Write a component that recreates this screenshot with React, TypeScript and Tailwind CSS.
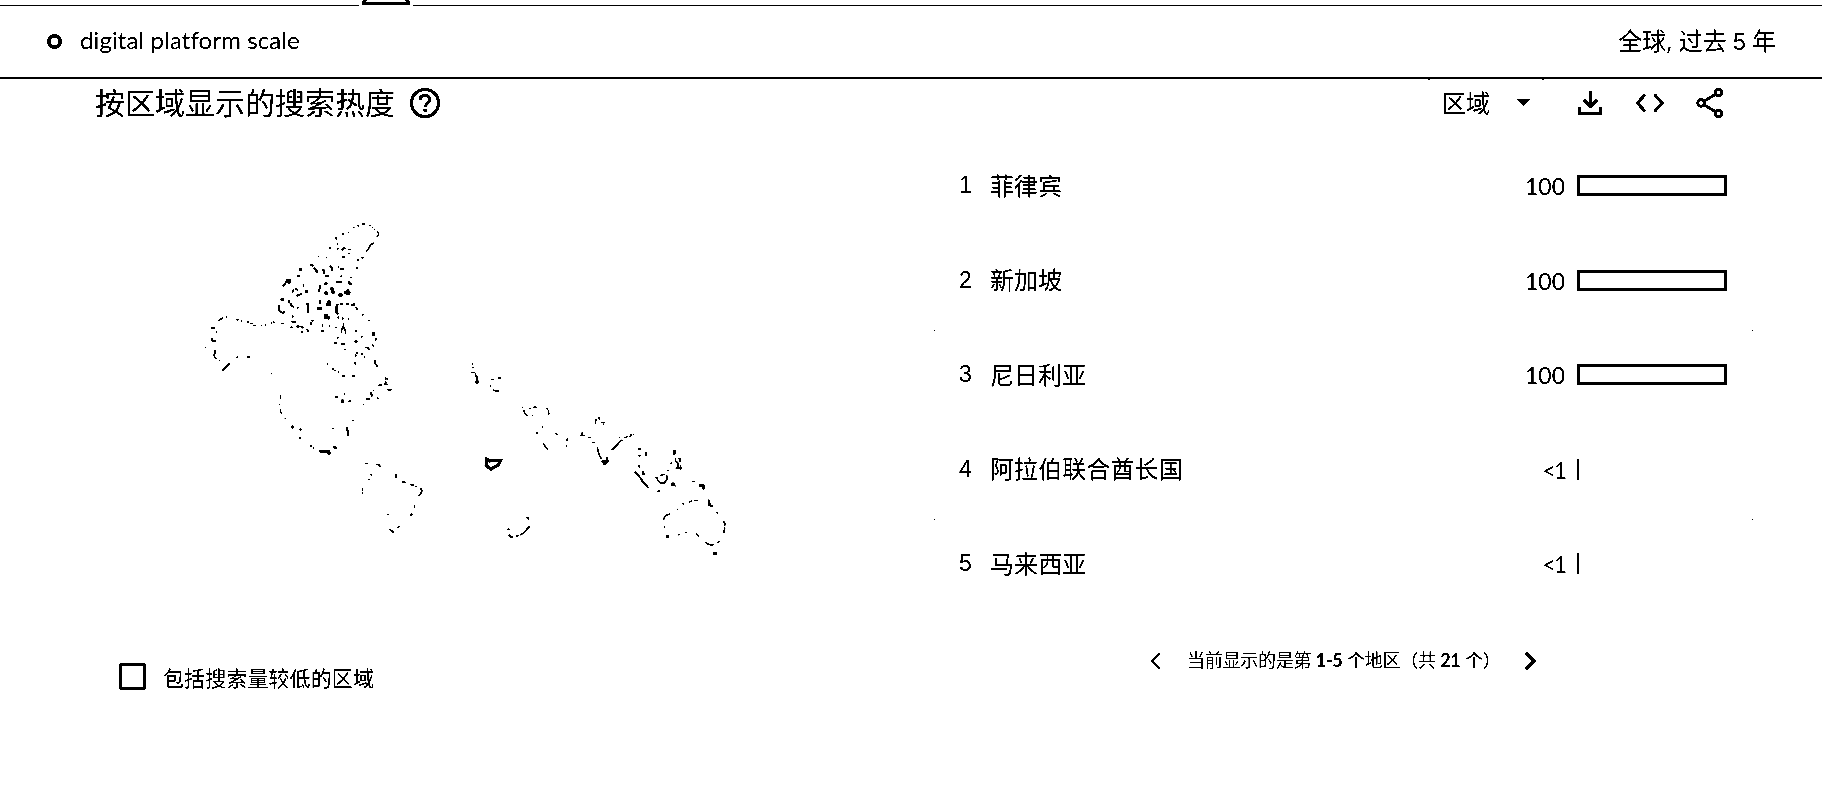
import React from 'react';

type Region = { rank: number; name: string; value: string; share: number };

const regions: Region[] = [
  { rank: 1, name: '菲律宾', value: '100', share: 100 },
  { rank: 2, name: '新加坡', value: '100', share: 100 },
  { rank: 3, name: '尼日利亚', value: '100', share: 100 },
  { rank: 4, name: '阿拉伯联合酋长国', value: '<1', share: 0 },
  { rank: 5, name: '马来西亚', value: '<1', share: 0 },
];

function HelpIcon() {
  return (
    <svg width="32" height="32" viewBox="0 0 32 32" fill="none" stroke="#000">
      <circle cx="16" cy="16" r="13.6" strokeWidth="3" />
      <path d="M11 13.3C11 10 13.2 8.3 16 8.3S21 10.200 21 12.700C21 16 16.400 16 16.400 19.700" strokeWidth="3" />
      <path d="M14.500 23.200h3.500" strokeWidth="3.200" />
    </svg>
  );
}

function DownloadIcon() {
  return (
    <svg width="26" height="26" viewBox="0 0 26 26" fill="none" stroke="#000" strokeWidth="3">
      <path d="M13.500 1v15M7 10l6.500 6.500L20 10" />
      <path d="M2.500 17.500V23.500H23.500V17.500" />
    </svg>
  );
}

function CodeIcon() {
  return (
    <svg width="30" height="20" viewBox="0 0 30 20" fill="none" stroke="#000" strokeWidth="3">
      <path d="M10 1.500L2.500 10L10 18.500M19.500 1.500L27 10L19.500 18.500" />
    </svg>
  );
}

function ShareIcon() {
  return (
    <svg width="28" height="30" viewBox="0 0 28 30" fill="none" stroke="#000" strokeWidth="2.800">
      <circle cx="22.500" cy="4.500" r="3.300" />
      <circle cx="5" cy="15" r="3.300" />
      <circle cx="22.500" cy="25.500" r="3.300" />
      <path d="M8 13.300L19.500 6.300M8 16.700L19.500 23.700" />
    </svg>
  );
}

function WorldMap() {
  return (
    <svg width="550" height="350" viewBox="-0.500 -1.500 1650 1050" fill="none" stroke="#000" strokeWidth="4">
      {/* Greenland and the Arctic islands */}
      <path d="M489 51l4-2M501 46h6M514 41h12M537 45h4M545 50h3M552 56h4M560 63l6 7l-6 9M551 97l-10 6l-6 12l-7 9M521 142h-8M507 148h-7M474 65v3M438 78v10M442 98v6M443 112v6M433 130h3M384 138h3M408 142h3M415 151h3M463 154h3M444 167v5M450 197h7M483 199v5M490 278l5 3M474 117h7M474 130l5-2M457 113h10" />
      <path d="M455 70h7M416 113h7M454 117h6M455 139h9M361 162l9 4M371 173l7 6l4 8M396 176l6 5v8M419 167l7 5v10M449 176h11M497 172h6M406 197h9M438 214h18M474 212l5 8h5M327 177h8M322 196h8" strokeWidth="7" />
      <path d="M278 228l8-10l4-9h9v7h-7M306 245l5-8M316 234l8 6M318 255h6l12-6M344 243h10M340 220v8M389 224v12M385 244l4-12" strokeWidth="5.500" />
      <path d="M405 217l4 5M403 248h10M424 230l6 20M445 253h12M462 246h10M470 238l6 8l-3 8M417 270v16M408 282h10M386 274h7M380 294h14M408 310v16M408 317l10 7" strokeWidth="10" />
      <path d="M443 280l-4 10v15l5 6M351 278l3 10v20M450 280h7M467 281h10M484 283h10" strokeWidth="7" />
      <path d="M270 267h12M296 268v9M300 277l4 8l8 6M268 283l-3 8l4 12l10 4l4-4M320 292h5M305 318h5M304 334h14M318 348h10M330 347l10 5M364 330l6 2M363 335v8M351 355l4 10M332 364h6M395 345h4M393 362h8M418 343v6M301 350h6M442 321h5M455 324h6M474 325h3M497 290l5 7M516 313h4M534 330h4" strokeWidth="5.500" />
      {/* Alaska and the western coast */}
      <path d="M85 330l8-5l6-3M109 317v5M138 328h8M152 331h4M170 334h7M181 338l6 3M190 345h8M213 344h3M224 343h4M241 338h6M251 332v6M273 339h7M47 410v3M79 363v3M75 418v8l-4 9l4 8h5M88 448v4M139 443l4-5M169 440h12M232 472h3M243 490h3M259 529h3M271 555v9M268 580v3M271 595v8l4 7M284 622l3 4M304 637h3" />
      <path d="M63 352h12M66 382v8M64 391h14M97 481l22-24" strokeWidth="6" />
      {/* Eastern Canada, the United States and Mexico */}
      <path d="M435 351h6M460 338v12l6 10v10M460 345l-6 15v8M443 380v4M498 358v6M513 379h4M548 364v10h5v-8M557 382v8M545 402l6 6M526 411h6l6 7M497 427h7M497 432v6M514 429l3 5M521 440h3M495 454v8M555 449v10l7 9M463 417h5M412 459v5M426 475h5M433 480h4M443 485h3M586 501v8M590 505h4M565 524h10M592 538h12M587 513l-2 9h8M550 538v4M560 563h5M518 582h4M427 655h3M463 549v3M475 572h8" strokeWidth="5" />
      <path d="M433 397h8M454 400h9M493 393h10M457 496h8M486 497h7M435 559h8M457 566v12M528 565h10M541 544l5 14M487 630h4M470 650l2 12M474 660v16M307 645v9M330 654l2 6M328 682h4M361 704l4 5M369 712h3" strokeWidth="6.500" />
      <path d="M388 722h30M412 728h9M430 713l9-4" strokeWidth="9" />
      {/* South America */}
      <path d="M526 759h8M559 762h6l6 7M543 791v4M536 806v3M517 834v8M518 846v3M636 815h10M661 823h10M676 828h4M691 833l4 8l-4 10l-6 6M673 884v8M592 911h3M598 956l6 5l6 6M622 952l6-5" strokeWidth="5" />
      <path d="M618 791v11M660 916l7-6M606 964h6" strokeWidth="7" />
      {/* Europe, Africa and the Middle East */}
      <g transform="translate(750 390)">
        <path d="M94 71h5M96 82h5M94 96h9M105 98l3 10l5 8M85 103h3M154 117h7M172 113h10M151 134v5M159 148l6 3h12M246 200h4M250 208l5 12l7 7M267 204h5M279 200h11M321 201v7M325 208v12h4M275 226h3M304 260h5M346 278l6 5M310 309l6 10l7 8M382 294l-3 8M377 316h4" />
        <path d="M106 124h11M111 108v22M290 274v6M178 110v5" strokeWidth="6.500" />
        <path d="M139 356l8 5l34-1l-6 13l-23 13l-14-11z" strokeWidth="9.500" />
        <path d="M202 566h6M258 532h7v6M268 558l-8 8l-5 8l-15 10M227 586h8" strokeWidth="4.500" />
        <path d="M206 582l5 7h7M262 560h7" strokeWidth="6" />
      </g>
      {/* South and Southeast Asia */}
      <g transform="translate(750 390)">
        <path d="M466 249v-10h5M475 230l4 7M483 246h10M488 252h3M421 285h14M426 275v9M444 291h8M457 306h6M471 320l4 15l4 12l5 9M500 349v18M514 329l8-7l10-10l8-10l7-4M536 290h3M552 291h6l5-4M569 290l5-9M578 281h2" strokeWidth="4.500" />
        <path d="M484 363h17l-7 8h-5M593 325h10M598 343v5M617 335v8h4M594 375l6 4M608 392v8h6M699 334h5l-2 9M702 328v9" strokeWidth="7" />
        <path d="M584 394l12 12l12 17l11 12l6 8M604 420l18 20" strokeWidth="5.500" />
        <path d="M646 412h6v8l10 8h10l8-10v-14M660 406l8-4h5M652 452h8M680 390h6M691 368h5M706 353v8l7 6v10l-4 5h17M714 355h6v10M721 373v14M696 426v9h5v-9M705 435v3M757 423h8" strokeWidth="4.500" />
        <path d="M776 435h17M785 435l8 10" strokeWidth="8" />
      </g>
      {/* Australia */}
      <g transform="translate(750 390)">
        <path d="M689 520l-10 4l-7 8l-2 7M673 558v3M711 506h3M726 490h6M747 485l9-4M762 480h12M806 477v17l8 3h5M828 517h6M850 543l4 5v8M854 561l-3 16M714 584l4-3M736 575h3M767 580l6 5l4 3M796 604l5 6l10 3h10M832 608l6-5" strokeWidth="4.500" />
        <path d="M677 588h9M805 485l6 7M819 639h11" strokeWidth="7" />
      </g>
    </svg>
  );
}

function CornerMarks() {
  return (
    <div className="flex h-px justify-between">
      <span className="size-px bg-black" />
      <span className="size-px bg-black" />
    </div>
  );
}

function RegionRow({ region }: { region: Region }) {
  return (
    <li className="flex h-[94.5px] items-center text-[24px] leading-none">
      <span className="w-[31px] font-['Liberation_Sans',sans-serif] text-[23px]">{region.rank}</span>
      <span className="flex-1 tracking-[0.1px]">{region.name}</span>
      {region.share > 0 ? (
        <span className="mr-[12px] pt-[2px] font-['Lato',sans-serif] text-[23px]">{region.value}</span>
      ) : (
        <span className="mr-[12px] pt-[2px] font-['Lato',sans-serif] text-[23px] tracking-[-2px]">{region.value}</span>
      )}
      <span className="flex w-[150px]">
        {region.share > 0 ? (
          <span className="h-[21px] border-[3px] border-black" style={{ width: `${region.share}%` }} />
        ) : (
          <span className="h-[21px] w-[2px] bg-black" />
        )}
      </span>
    </li>
  );
}

export default function App() {
  return (
    <div className="flex h-[792px] w-[1822px] flex-col overflow-hidden bg-white font-['Open_Sans','Noto_Sans_CJK_SC',sans-serif] text-black brightness-[0.9] contrast-[20]">
      <div className="flex h-[6px] items-end">
        <div className="h-px w-[359px] bg-black" />
        <svg className="mr-[2px] ml-[3px]" width="49" height="6" viewBox="0 0 49 6">
          <path d="M0 5V2L2 0H5L4 2H44L43 0H46L48 2V5Z" />
        </svg>
        <div className="h-px flex-1 bg-black" />
      </div>

      <header className="flex h-[73px] shrink-0 items-center justify-between border-b-2 border-black pr-[46px] pl-[47px]">
        <div className="flex items-center">
          <svg width="15" height="15" viewBox="0 0 15 15">
            <path fillRule="evenodd" d="M7.500 0A7.500 7.500 0 1 1 7.500 15A7.500 7.500 0 1 1 7.500 0ZM5 4L4 5V10L5 11H10L11 10V5L10 4Z" />
          </svg>
          <span className="ml-[18px] pb-[4px] font-['Lato',sans-serif] text-[24px] leading-none tracking-[0.1px]">digital platform scale</span>
        </div>
        <span className="pb-px text-[24px] leading-none">
          全球, 过去 <span className="font-['Liberation_Sans',sans-serif] text-[23px]">5</span> 年
        </span>
      </header>

      <main className="flex flex-1">
        <section className="flex w-[934px] flex-col">
          <div className="flex h-[48px] items-center pl-[95px]">
            <h2 className="text-[30px] leading-none">按区域显示的搜索热度</h2>
            <div className="ml-[14px]">
              <HelpIcon />
            </div>
          </div>
          <div className="mt-[83px] ml-[190px]">
            <WorldMap />
          </div>
          <label className="mt-[103px] ml-[119px] flex items-center">
            <span className="size-[27px] rounded-[2px] border-[3px] border-black" />
            <span className="ml-[17px] pt-[3px] text-[21px] leading-none tracking-[0.1px]">包括搜索量较低的区域</span>
          </label>
        </section>

        <section className="flex w-[819px] flex-col">
          <div className="flex h-px justify-end gap-[112px] pr-[209px]">
            <span className="h-px w-[2px] bg-black" />
            <span className="h-px w-[2px] bg-black" />
          </div>
          <div className="flex h-[46px] items-center justify-end pr-[29px]">
            <span className="text-[24px] leading-none">区域</span>
            <svg className="mr-[47px] ml-[27px]" width="13" height="8" viewBox="0 0 13 8">
              <path d="M0 0H13L6.500 7.500Z" />
            </svg>
            <DownloadIcon />
            <div className="ml-[32px]">
              <CodeIcon />
            </div>
            <div className="ml-[31px]">
              <ShareIcon />
            </div>
          </div>
          <ol className="mt-[12.3px] pr-[26px] pl-[25px]">
            {regions.map((region) => (
              <RegionRow key={region.rank} region={region} />
            ))}
          </ol>
          <div className="-mt-[280.8px] flex h-[190px] flex-col justify-between">
            <CornerMarks />
            <CornerMarks />
          </div>
          <nav className="mt-[129px] ml-[216px] flex h-[24px] items-center">
            <svg width="12" height="18" viewBox="0 0 12 18" fill="none" stroke="#000" strokeWidth="2">
              <path d="M10 1.500L2 9L10 16.500" />
            </svg>
            <span className="ml-[25px] w-[302px] pb-[2px] text-[18px] leading-none tracking-[-0.25px] whitespace-pre">
              当前显示的是第 <b className="font-['Lato',sans-serif]">1-5</b> 个地区（共 <b className="font-['Lato',sans-serif]">21</b> 个）
            </span>
            <svg className="ml-[35px]" width="14" height="20" viewBox="0 0 14 20" fill="none" stroke="#000" strokeWidth="3.500">
              <path d="M2 2L10 10L2 18" />
            </svg>
          </nav>
        </section>
      </main>
    </div>
  );
}
